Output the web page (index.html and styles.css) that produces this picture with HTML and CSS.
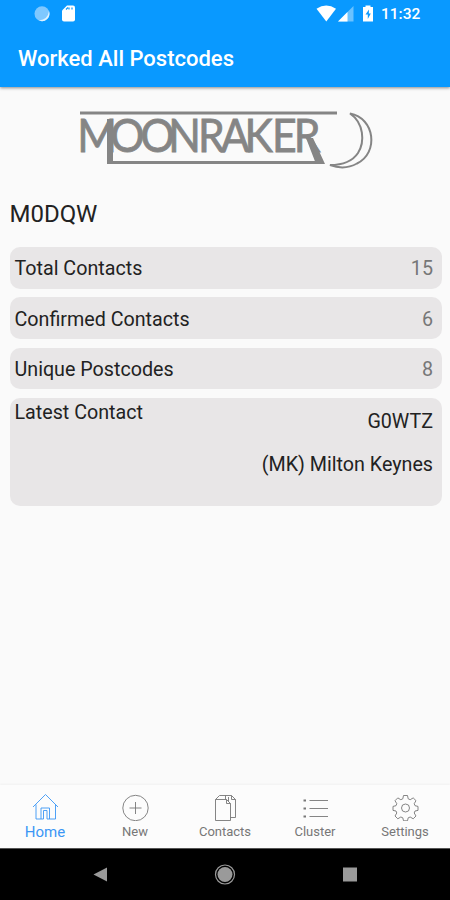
FILE: index.html
```html
<!DOCTYPE html>
<html lang="en">
<head>
    <meta charset="UTF-8">
    <meta name="viewport" content="width=device-width, initial-scale=1.0">
    <title>Worked All Postcodes</title>
    <link rel="stylesheet" href="styles.css">
</head>
<body>
    <header class="header">
        <div class="status-bar">
            <svg class="status-left" width="42" height="18" viewBox="34 5 42 18">
                <circle cx="42" cy="13.7" r="7.5" fill="#7fc8ff"/>
                <path d="M49 11a7.5 7.5 0 0 1-10 9.500q9-1 10-9.500z" fill="#dff2ff"/>
                <path d="M67 5.500h6q2 0 2 2v12q0 2-2 2h-9q-2 0-2-2v-9z" fill="#fff"/>
                <path d="M66 9.500l2-2M69 9.500v-2M72 9.500v-2" stroke="#0999ff" stroke-width="1.200"/>
            </svg>
            <svg width="60" height="18" viewBox="315 5 60 18">
                <path d="M316.500 8.800q9.700-6.500 19.500 0L326.300 21.500z" fill="#fff"/>
                <path d="M338 21.500L353.500 6v15.500z" fill="#6bc2ff"/>
                <path d="M338 21.500L347.500 12v9.500z" fill="#fff"/>
                <path d="M365.500 5.500h5v1.500h2.500v14.500h-10V7h2.500z" fill="#fff"/>
                <path d="M369 9.500l-3.500 5h2.300v4.500l3-5.500h-2z" fill="#0999ff"/>
            </svg>
            <span class="clock">11:32</span>
        </div>
        <h1 class="title">Worked All Postcodes</h1>
    </header>

    <main class="content">
        <svg class="logo" width="300" height="66" viewBox="76 106 300 66">
            <text class="logo-text" transform="scale(.93 1)" y="152" x="83 118.500 151 181 213 237.500 263 292.500 316">MOONRAKER</text>
            <path d="M80 113h257M113 162.500h208" stroke="#858585" stroke-width="3" fill="none"/>
            <path d="M107 119h6v45h-6zM306 138h7l12 26h-9z" fill="#858585"/>
            <path d="M350 113.500C375 118 379 153 357 163.500C348 168.500 338 168 330 165C342 165 352 162 358 153C365 142 364 123 350 113.500z" fill="none" stroke="#858585" stroke-width="2"/>
        </svg>

        <h2 class="callsign">M0DQW</h2>

        <div class="cards">
            <div class="card"><span>Total Contacts</span><span class="count">15</span></div>
            <div class="card"><span>Confirmed Contacts</span><span class="count">6</span></div>
            <div class="card"><span>Unique Postcodes</span><span class="count">8</span></div>
            <div class="card latest">
                <span>Latest Contact</span>
                <div class="contact">
                    <span>G0WTZ</span>
                    <span>(MK) Milton Keynes</span>
                </div>
            </div>
        </div>
    </main>

    <nav class="tabs">
        <a class="tab active">
            <svg class="icon" viewBox="0 0 28 28"><path d="M2 14L14.500 1.500 27 14M5 11.500V26h5V15h8.500v11h6V11.500M10 26h2.500V17.500H16V26h2.500"/></svg>
            <span>Home</span>
        </a>
        <a class="tab">
            <svg class="icon" viewBox="0 0 28 28"><circle cx="14.500" cy="15" r="12.700"/><path d="M14.500 9v12M8.500 15h12"/></svg>
            <span>New</span>
        </a>
        <a class="tab">
            <svg class="icon" viewBox="0 0 28 28"><path d="M4.500 6.500H15.500L19.500 10.500V27.500H4.500zM15.500 6.500v4h4M4.500 6.500L8.500 2.500H20.500L24.500 6.500V24.500H19.500M14.500 2.500v4M20.500 2.500v4h4M17.500 4v4.500"/></svg>
            <span>Contacts</span>
        </a>
        <a class="tab">
            <svg class="icon" viewBox="0 0 28 28"><path d="M8.500 7.500h18.500M8.500 15.500h18.500M8.500 23.500h18.500"/><path d="M2.500 7.500h2.500M2.500 15.500h2.500M2.500 23.500h2.500" stroke-width="2"/></svg>
            <span>Cluster</span>
        </a>
        <a class="tab">
            <svg class="icon" viewBox="0 0 28 28"><circle cx="14.500" cy="15" r="4"/><path d="M12.500 2.500h4l.7 3.300 2 .9 3-1.800 2.800 2.800-1.800 3 .8 2 3 .7v4l-3 .6-.8 2 1.800 3-2.800 2.800-3-1.800-2 .8-.7 3h-4l-.7-3-2-.8-3 1.800-2.800-2.800 1.800-3-.8-2-3-.6v-4l3-.7.8-2-1.800-3 2.800-2.800 3 1.800 2-.9z"/></svg>
            <span>Settings</span>
        </a>
    </nav>

    <footer class="nav-bar">
        <svg width="16" height="16" viewBox="0 0 16 16"><path d="M1.500 7.500L15 .5v14z"/></svg>
        <svg width="22" height="22" viewBox="0 0 22 22"><circle cx="11" cy="10.500" r="9.500" fill="none" stroke="#9a9a9a" stroke-width="1.200"/><circle cx="11" cy="10.500" r="7.500"/></svg>
        <svg width="16" height="16" viewBox="0 0 16 16"><path d="M1 .5h14v14H1z"/></svg>
    </footer>
</body>
</html>
```
FILE: styles.css
```css
* {
    box-sizing: border-box;
}
body {
    display: flex;
    flex-direction: column;
    height: 900px;
    margin: 0;
    font-family: Roboto, sans-serif;
    background-color: #fafafa;
    color: #222;
}
.header {
    height: 87px;
    background-color: #0999ff;
    color: white;
    box-shadow: 0 1px 3px rgba(0, 0, 0, 0.45);
}
.status-bar {
    display: flex;
    height: 28px;
    padding: 5px 30px 0 34px;
}
.status-left {
    margin-right: auto;
}
.clock {
    width: 45px;
    padding-left: 6px;
    font-size: 15.5px;
    font-weight: 500;
    line-height: 19px;
}
.title {
    margin: 0;
    padding-left: 18px;
    font-size: 22px;
    font-weight: 500;
    line-height: 62px;
}
.content {
    flex: 1;
    padding: 19px 8.5px 0 9.5px;
}
.logo {
    display: block;
    margin-left: 66.5px;
}
.logo-text {
    font-family: Lato, sans-serif;
    font-size: 46px;
    fill: #858585;
    stroke: #858585;
    stroke-width: 0.8;
}
.callsign {
    margin: 26px 0 17px;
    font-size: 24px;
    font-weight: 400;
    line-height: 32px;
}
.cards {
    display: flex;
    flex-direction: column;
    gap: 8.5px;
}
.card {
    display: flex;
    justify-content: space-between;
    align-items: center;
    height: 41.8px;
    padding: 2px 8.5px 0 5px;
    border-radius: 10px;
    background-color: #e8e6e7;
    font-size: 19.7px;
}
.count {
    color: #777;
}
.latest {
    align-items: flex-start;
    height: 108px;
    padding-top: 3px;
    line-height: 24px;
}
.contact {
    display: flex;
    flex-direction: column;
    gap: 19px;
    padding-top: 9px;
    text-align: right;
}
.tabs {
    display: grid;
    grid-template-columns: repeat(5, 1fr);
    height: 63px;
    padding-top: 8px;
    background-color: #fcfcfc;
    box-shadow: 0 -1px 2px rgba(0, 0, 0, 0.04);
}
.tab {
    display: flex;
    flex-direction: column;
    align-items: center;
    gap: 1px;
    color: #777;
    font-size: 13px;
    line-height: 20px;
}
.active {
    color: #3b96f5;
    font-size: 15px;
}
.icon {
    width: 28px;
    height: 28px;
    fill: none;
    stroke: currentColor;
    stroke-width: 0.9;
}
.nav-bar {
    display: flex;
    justify-content: space-between;
    align-items: center;
    height: 52px;
    padding: 0 92px;
    border-top: 1px solid #555;
    background-color: black;
    fill: #9a9a9a;
}
```
